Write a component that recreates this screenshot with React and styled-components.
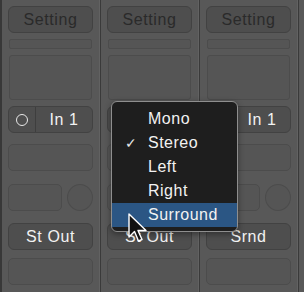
import styled, { createGlobalStyle } from "styled-components";

const GlobalStyle = createGlobalStyle`
  html, body {
    margin: 0;
    padding: 0;
    background: #575757;
  }
  body {
    font-family: "Liberation Sans", Arial, sans-serif;
  }
`;

const STRIPS = [
  { input: "In 1", output: "St Out" },
  { input: "In 1", output: "St Out" },
  { input: "In 1", output: "Srnd" },
];

const MENU_ITEMS = ["Mono", "Stereo", "Left", "Right", "Surround"];

export default function App() {
  return (
    <>
      <GlobalStyle />
      <Mixer>
        {STRIPS.map((strip, i) => (
          <Strip key={i}>
            <SlotButton $dim>Setting</SlotButton>
            <ThinBar />
            <BigBox />
            <InputButton>
              <RingCell>
                <Ring />
              </RingCell>
              <InputLabel>{i === 1 ? "" : strip.input}</InputLabel>
            </InputButton>
            <EmptySlot $top={11} />
            <PanRow>
              <PanBox />
              <PanKnob />
            </PanRow>
            <SlotButton $top={12}>{strip.output}</SlotButton>
            <EmptySlot $top={8} />
          </Strip>
        ))}

        <Menu>
          {MENU_ITEMS.map((item) => (
            <MenuItem key={item} $active={item === "Surround"}>
              <Check>{item === "Stereo" ? "✓" : ""}</Check>
              {item}
            </MenuItem>
          ))}
        </Menu>

        <Cursor width="22" height="30" viewBox="0 0 22 30">
          <path
            d="M2 1 L2 24 L7.5 18.5 L11.5 28 L15 26.5 L11 17.5 L19 17.5 Z"
            fill="#111"
            stroke="#fff"
            strokeWidth="1.4"
            strokeLinejoin="round"
          />
        </Cursor>
      </Mixer>
    </>
  );
}

const Mixer = styled.div`
  position: relative;
  display: flex;
  width: 304px;
  height: 292px;
  overflow: hidden;
  border-left: 2px solid #383838;
  box-sizing: border-box;
  background: #585858;
`;

const Strip = styled.div`
  width: 99px;
  flex: none;
  display: flex;
  flex-direction: column;
  padding: 6px 7px 0 6px;
  box-sizing: border-box;
  border-right: 1px solid #3a3a3a;
  box-shadow: inset -1px 0 0 #626262;

  &:last-of-type {
    width: 102px;
    border-right: none;
    box-shadow: none;
  }
`;

const SlotButton = styled.div`
  height: 27px;
  margin-top: ${(p) => p.$top || 0}px;
  border: 1px solid #424242;
  border-radius: 6px;
  background: #4e4e4e;
  box-sizing: border-box;
  display: flex;
  align-items: center;
  justify-content: center;
  font-size: 16px;
  letter-spacing: 0.6px;
  color: ${(p) => (p.$dim ? "#2a2a2a" : "#f2f2f2")};
`;

const ThinBar = styled.div`
  height: 10px;
  margin: 6px 1px 0;
  border: 1px solid #4c4c4c;
  border-radius: 2px;
  background: #555555;
  box-sizing: border-box;
`;

const BigBox = styled.div`
  height: 45px;
  margin: 6px 1px 0;
  border: 1px solid #4c4c4c;
  border-radius: 3px;
  background: #555555;
  box-sizing: border-box;
`;

const InputButton = styled.div`
  height: 27px;
  margin-top: 6px;
  display: flex;
  border: 1px solid #424242;
  border-radius: 6px;
  background: #4e4e4e;
  box-sizing: border-box;
  overflow: hidden;
`;

const RingCell = styled.div`
  width: 26px;
  display: flex;
  align-items: center;
  justify-content: center;
  border-right: 1px solid #3e3e3e;
`;

const Ring = styled.div`
  width: 12px;
  height: 12px;
  border: 1.5px solid #e8e8e8;
  border-radius: 50%;
  box-sizing: border-box;
`;

const InputLabel = styled.div`
  flex: 1;
  display: flex;
  align-items: center;
  justify-content: center;
  font-size: 16px;
  letter-spacing: 0.6px;
  color: #f2f2f2;
`;

const EmptySlot = styled.div`
  height: 27px;
  margin-top: ${(p) => p.$top || 0}px;
  border: 1px solid #4c4c4c;
  border-radius: 5px;
  background: #555555;
  box-sizing: border-box;
`;

const PanRow = styled.div`
  height: 27px;
  margin-top: 13px;
  display: flex;
  gap: 5px;
`;

const PanBox = styled.div`
  width: 56px;
  border: 1px solid #4c4c4c;
  border-radius: 5px;
  background: #555555;
  box-sizing: border-box;
`;

const PanKnob = styled.div`
  width: 27px;
  height: 27px;
  border: 1px solid #4c4c4c;
  border-radius: 50%;
  background: #555555;
  box-sizing: border-box;
`;

const Menu = styled.div`
  position: absolute;
  left: 109px;
  top: 101px;
  width: 127px;
  padding: 5px 0 4px;
  background: #1e1e1e;
  border: 1px solid #8e8e8e;
  border-radius: 6px;
  box-sizing: border-box;
  box-shadow: 0 2px 6px rgba(0, 0, 0, 0.4);
`;

const MenuItem = styled.div`
  height: 24px;
  display: flex;
  align-items: center;
  font-size: 16px;
  letter-spacing: 0.5px;
  color: #f2f2f2;
  background: ${(p) => (p.$active ? "#2b5684" : "transparent")};
`;

const Check = styled.span`
  width: 36px;
  padding-left: 13px;
  box-sizing: border-box;
  font-size: 14px;
  color: #e8e8e8;
`;

const Cursor = styled.svg`
  position: absolute;
  left: 125px;
  top: 213px;
`;
